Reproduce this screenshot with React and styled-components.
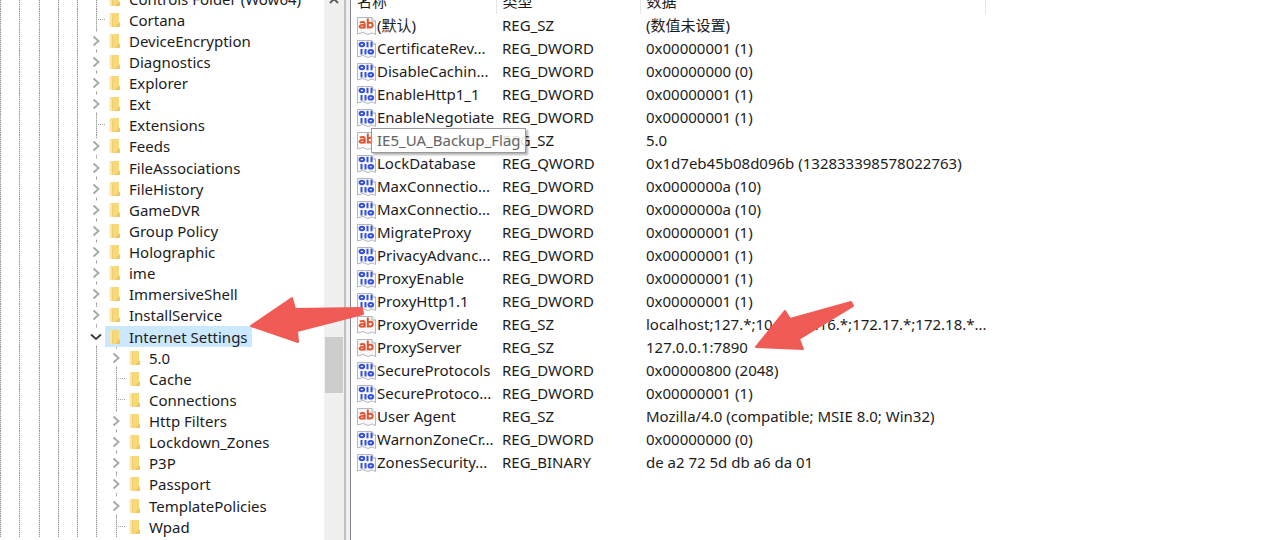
import React from "react";
import styled, { createGlobalStyle } from "styled-components";

const GlobalStyle = createGlobalStyle`
    * {
        box-sizing: border-box;
    }
    body {
        margin: 0;
        background: #fff;
        color: #1c1c1c;
        font-family: "Noto Sans", "Noto Sans CJK SC", sans-serif;
        font-size: 15px;
        overflow: hidden;
    }
    svg {
        flex: none;
    }
`;

const Window = styled.main`
    position: relative;
    display: flex;
    height: 100vh;
    overflow: hidden;
`;

const TreePane = styled.nav`
    flex: 0 0 324px;
    overflow: hidden;
`;

const Tree = styled.ul`
    list-style: none;
    margin: -12px 0 0;
    padding: 0;
`;

const TreeRow = styled.li`
    display: flex;
    height: 21px;
    white-space: nowrap;
    &:nth-child(8n) {
        height: 22px;
    }
`;

const dots = "repeating-linear-gradient(#9a9a9a 0 1px, #d8d8d8 1px 2px)";

const Guide = styled.span`
    flex: none;
    width: 19px;
    background: ${dots} left / 1px 100% no-repeat;
    &:nth-child(4n + 2) {
        width: 20px;
    }
`;

const Branch = styled.span`
    flex: none;
    display: flex;
    align-items: center;
    width: 18px;
    margin-left: -9px;
    background: ${dots} center / 1px 100% no-repeat;
`;

const Twig = styled.span`
    width: 7px;
    margin-left: 11px;
    border-top: 1px dotted #a6a6a6;
`;

const Toggle = styled.button`
    display: flex;
    align-items: center;
    justify-content: center;
    width: 18px;
    height: 17px;
    padding: 0;
    border: 0;
    background: #fff;
`;

const Key = styled.a`
    display: flex;
    align-items: center;
    gap: 8px;
    padding: 0 4px 0 3px;
    color: inherit;
    text-decoration: none;
    background: ${(p) => (p.$selected ? "#cce8ff" : "transparent")};
`;

const ScrollTrack = styled.div`
    flex: 0 0 20px;
    display: flex;
    flex-direction: column;
    align-items: center;
    background: #f0f0f0;
`;

const ScrollUp = styled.button`
    display: flex;
    justify-content: center;
    width: 18px;
    height: 8px;
    margin-top: -3px;
    padding: 0;
    border: 0;
    background: transparent;
`;

const ScrollGap = styled.span`
    flex: ${(p) => p.$grow} 0 0;
`;

const ScrollThumb = styled.span`
    width: 18px;
    height: 56px;
    background: #cdcdcd;
`;

const Splitter = styled.div`
    flex: 0 0 7px;
    background: #f0f0f0;
    border-left: 2px solid #c0c0c0;
    border-right: 1px solid #828790;
`;

const ValuePane = styled.section`
    flex: 1;
    overflow: hidden;
`;

const Values = styled.table`
    width: 634px;
    margin-top: -10px;
    border-collapse: collapse;
    table-layout: fixed;
`;

const Column = styled.th`
    width: ${(p) => p.$width};
    height: 24px;
    padding: 0 6px;
    border-right: 1px solid #e5e5e5;
    font-weight: 400;
    line-height: 22px;
    text-align: left;
    vertical-align: top;
`;

const Cell = styled.td`
    height: 23px;
    padding: 0 0 0 6px;
    line-height: 23px;
    white-space: nowrap;
`;

const ValueName = styled.span`
    display: flex;
    align-items: center;
    gap: 1px;
    height: 23px;
    position: relative;
`;

const Tooltip = styled.span`
    position: absolute;
    left: 14px;
    top: -1px;
    z-index: 1;
    padding: 0 4px 0 5px;
    border: 1px solid #999;
    background: rgba(255, 255, 255, 0.88);
    box-shadow: 2px 2px 2px rgba(0, 0, 0, 0.3);
    color: #666;
    line-height: 23px;
`;

const Arrows = styled.svg`
    position: absolute;
    left: 0;
    top: 0;
    width: 1280px;
    height: 540px;
    pointer-events: none;
    z-index: 2;
`;

const keys = [
    { name: "Controls Folder (Wow64)" },
    { name: "Cortana" },
    { name: "DeviceEncryption", more: true },
    { name: "Diagnostics", more: true },
    { name: "Explorer", more: true },
    { name: "Ext", more: true },
    { name: "Extensions" },
    { name: "Feeds", more: true },
    { name: "FileAssociations", more: true },
    { name: "FileHistory", more: true },
    { name: "GameDVR", more: true },
    { name: "Group Policy", more: true },
    { name: "Holographic", more: true },
    { name: "ime", more: true },
    { name: "ImmersiveShell", more: true },
    { name: "InstallService", more: true },
    { name: "Internet Settings", more: true, open: true },
    { name: "5.0", more: true, child: true },
    { name: "Cache", child: true },
    { name: "Connections", child: true },
    { name: "Http Filters", more: true, child: true },
    { name: "Lockdown_Zones", more: true, child: true },
    { name: "P3P", more: true, child: true },
    { name: "Passport", more: true, child: true },
    { name: "TemplatePolicies", more: true, child: true },
    { name: "Wpad", child: true },
];

const values = [
    ["(默认)", "REG_SZ", "(数值未设置)"],
    ["CertificateRev...", "REG_DWORD", "0x00000001 (1)"],
    ["DisableCachin...", "REG_DWORD", "0x00000000 (0)"],
    ["EnableHttp1_1", "REG_DWORD", "0x00000001 (1)"],
    ["EnableNegotiate", "REG_DWORD", "0x00000001 (1)"],
    ["IE5_UA_Backup...", "REG_SZ", "5.0", "IE5_UA_Backup_Flag"],
    ["LockDatabase", "REG_QWORD", "0x1d7eb45b08d096b (132833398578022763)"],
    ["MaxConnectio...", "REG_DWORD", "0x0000000a (10)"],
    ["MaxConnectio...", "REG_DWORD", "0x0000000a (10)"],
    ["MigrateProxy", "REG_DWORD", "0x00000001 (1)"],
    ["PrivacyAdvanc...", "REG_DWORD", "0x00000001 (1)"],
    ["ProxyEnable", "REG_DWORD", "0x00000001 (1)"],
    ["ProxyHttp1.1", "REG_DWORD", "0x00000001 (1)"],
    [
        "ProxyOverride",
        "REG_SZ",
        "localhost;127.*;10.*;172.16.*;172.17.*;172.18.*...",
    ],
    ["ProxyServer", "REG_SZ", "127.0.0.1:7890"],
    ["SecureProtocols", "REG_DWORD", "0x00000800 (2048)"],
    ["SecureProtoco...", "REG_DWORD", "0x00000001 (1)"],
    [
        "User Agent",
        "REG_SZ",
        "Mozilla/4.0 (compatible; MSIE 8.0; Win32)",
    ],
    ["WarnonZoneCr...", "REG_DWORD", "0x00000000 (0)"],
    ["ZonesSecurity...", "REG_BINARY", "de a2 72 5d db a6 da 01"],
];

function Chevron({ open }) {
    return open ? (
        <svg width="12" height="12" viewBox="0 0 12 12" fill="none">
            <path d="M1 3.500 6 8l5-4.500" stroke="#404040" strokeWidth="2" />
        </svg>
    ) : (
        <svg width="12" height="12" viewBox="0 0 12 12" fill="none">
            <path d="M3.500 1.500 8.500 6l-5 4.500" stroke="#a6a6a6" strokeWidth="1.800" />
        </svg>
    );
}

function FolderIcon() {
    return (
        <svg width="13" height="16" viewBox="0 0 13 16">
            <path d="M2.500 1H11v9.500l1 .5v4H2.500z" fill="#f8d978" />
            <path d="M1.500 1.500 4.500 3v11.500l-1.500.500-1.500-1z" fill="#fbe6a8" />
            <path d="M4.500 3v11.500" stroke="#edc668" strokeWidth=".8" />
            <path d="M11 10.500 12 11v4H7z" fill="#f0c764" />
        </svg>
    );
}

function ValueIcon({ text }) {
    return (
        <svg width="19" height="20" viewBox="0 0 19 20">
            <path
                d="M.5 1.500h14.500l3.500 3.500v13.500l-3.500-1.500-4 1.500-5-2-5.500 1.500z"
                fill="#f8f9fb"
                stroke="#b4b8be"
            />
            <path d="M15 1.500v3.500h3.500" fill="#fff" stroke="#a4a8ae" />
            {text ? (
                <g fill="none" stroke="#e0542f" strokeWidth="2">
                    <path d="M2.800 6.600c3-1.300 4.900-.6 4.900 1.500v4.400M7.700 9c-3.200-.4-5.100.2-5.100 1.500 0 1.700 3.600 1.700 5.100-.2" />
                    <path d="M10.800 2.500v10M10.800 8c1.200-2 4.900-1.900 4.900 1s-3.700 3.400-4.900 1.300" />
                </g>
            ) : (
                <g fill="none" stroke="#3450dc" strokeWidth="2">
                    <ellipse cx="4.900" cy="5.500" rx="2.300" ry="1.800" />
                    <path d="M10.500 2.700v5.600M14.500 2.700v5.600" />
                    <path d="M4.500 10v5.600M8.500 10v5.600" />
                    <ellipse cx="13.800" cy="12.800" rx="2.300" ry="1.800" />
                </g>
            )}
        </svg>
    );
}

function KeyRow({ item }) {
    const guides = item.child ? 6 : 5;
    return (
        <TreeRow>
            {Array.from({ length: guides }, (_, i) => (
                <Guide key={i} />
            ))}
            <Branch>
                {item.more ? (
                    <Toggle aria-label={item.name}>
                        <Chevron open={item.open} />
                    </Toggle>
                ) : (
                    <Twig />
                )}
            </Branch>
            <Key href="#" $selected={item.open}>
                <FolderIcon />
                {item.name}
            </Key>
        </TreeRow>
    );
}

export default function App() {
    return (
        <Window>
            <GlobalStyle />
            <TreePane>
                <Tree>
                    {keys.map((item) => (
                        <KeyRow key={item.name} item={item} />
                    ))}
                </Tree>
            </TreePane>
            <ScrollTrack>
                <ScrollUp aria-label="Scroll up">
                    <svg width="10" height="8" viewBox="0 0 10 8" fill="none">
                        <path d="M1 6l4-4 4 4" stroke="#606060" strokeWidth="2" />
                    </svg>
                </ScrollUp>
                <ScrollGap $grow={333} />
                <ScrollThumb />
                <ScrollGap $grow={147} />
            </ScrollTrack>
            <Splitter />
            <ValuePane>
                <Values>
                    <thead>
                        <tr>
                            <Column $width="145px">名称</Column>
                            <Column $width="144px">类型</Column>
                            <Column $width="345px">数据</Column>
                        </tr>
                    </thead>
                    <tbody>
                        {values.map(([name, type, data, tip], i) => (
                            <tr key={i}>
                                <Cell>
                                    <ValueName>
                                        <ValueIcon text={type === "REG_SZ"} />
                                        {name}
                                        {tip && <Tooltip>{tip}</Tooltip>}
                                    </ValueName>
                                </Cell>
                                <Cell>{type}</Cell>
                                <Cell>{data}</Cell>
                            </tr>
                        ))}
                    </tbody>
                </Values>
            </ValuePane>
            <Arrows
                viewBox="0 0 1280 540"
                fill="#f05b56"
                stroke="#f05b56"
                strokeWidth="2"
                strokeLinejoin="round"
            >
                <path d="M251 326 292 298l3 11 67-1 1 6-66 17 1 11z" />
                <path d="M756 347 785 311l5 8 61-17 2 4-54 33 4 10z" />
            </Arrows>
        </Window>
    );
}
